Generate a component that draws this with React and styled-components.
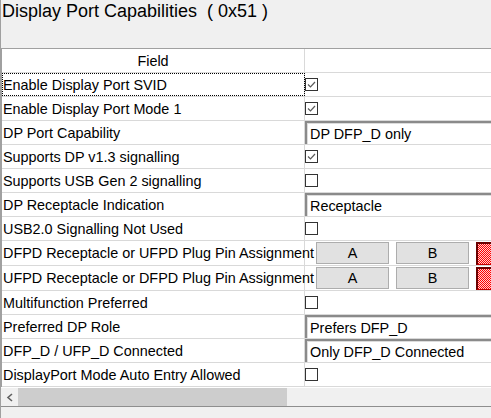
import React from 'react'
import styled, { createGlobalStyle } from 'styled-components'

const Global = createGlobalStyle`
  html, body { margin: 0; padding: 0; background: #f0f0f0; }
  body { font-family: "Liberation Sans", Arial, sans-serif; }
`

const Window = styled.div`
  width: 491px;
  height: 418px;
  overflow: hidden;
  background: #f0f0f0;
  display: flex;
  flex-direction: column;
  border-left: 1px solid #a0a0a0;
  box-sizing: border-box;
`

const Title = styled.div`
  height: 48px;
  padding: 1px 0 0 1px;
  box-sizing: border-box;
  font-size: 18px;
  line-height: 20px;
  color: #000;
  white-space: pre;
`

const Panel = styled.div`
  border-top: 1px solid #a0a0a0;
  border-left: 1px solid #a0a0a0;
  background: #fff;
  display: flex;
  flex-direction: column;
  width: 600px;
`

const Row = styled.div`
  display: flex;
  height: ${p => p.$tall ? 24 : 23}px;
  border-bottom: 1px solid #d9d9d9;
  font-size: 14.4px;
  color: #000;
`

const FieldCell = styled.div`
  width: 303px;
  flex: none;
  border-right: 1px solid #d9d9d9;
  display: flex;
  align-items: center;
  justify-content: ${p => p.$center ? 'center' : 'flex-start'};
  padding-left: ${p => p.$center ? 0 : 1}px;
  box-sizing: border-box;
  white-space: nowrap;
  outline: ${p => p.$focus ? '1px dotted #000' : 'none'};
  outline-offset: -1px;
`

const ValueCell = styled.div`
  flex: 1;
  display: flex;
  align-items: center;
  gap: ${p => p.$gap || 0}px;
  padding-left: ${p => p.$pad || 0}px;
`

const Box = styled.div`
  width: 11px;
  height: 11px;
  border: 1px solid #333;
  background: #fff;
  display: flex;
  align-items: center;
  justify-content: center;
`

const Combo = styled.div`
  align-self: stretch;
  flex: 1;
  display: flex;
  align-items: center;
  padding-left: 3px;
  border-top: 2px solid #8a8a8a;
  border-left: 2px solid #8a8a8a;
  box-shadow: inset 1px 1px 0 #dcdcdc;
  background: #fff;
`

const PinButton = styled.div`
  width: 71px;
  height: 20px;
  background: #e1e1e1;
  border: 1px solid #adadad;
  display: flex;
  align-items: center;
  justify-content: center;
`

const RedBox = styled.div`
  width: 40px;
  height: 20px;
  border-top: 2px solid #6a0000;
  border-left: 2px solid #6a0000;
  border-bottom: 1px solid #c00000;
  background-color: #ff0000;
  background-image: repeating-conic-gradient(#ff0000 0 25%, #ffd0d0 0 50%);
  background-size: 2px 2px;
`

const Scrollbar = styled.div`
  height: 18px;
  background: #f0f0f0;
  display: flex;
  align-items: stretch;
  border-top: 1px solid #fff;
`

const Arrow = styled.div`
  width: 17px;
  display: flex;
  align-items: center;
  justify-content: center;
`

const Thumb = styled.div`
  width: 269px;
  background: #cdcdcd;
`

const Footer = styled.div`
  flex: 1;
  border-top: 1px solid #8e8e8e;
  background: #f0f0f0;
  margin-left: -1px;
`

function Check({ on }) {
  return (
    <Box>
      {on && (
        <svg width="11" height="11" viewBox="0 0 11 11">
          <path d="M2 5.5 L4.5 8 L9 3" fill="none" stroke="#5a5a5a" strokeWidth="1.2" />
        </svg>
      )}
    </Box>
  )
}

const rows = [
  { label: 'Enable Display Port SVID', type: 'check', on: true, focus: true },
  { label: 'Enable Display Port Mode 1', type: 'check', on: true },
  { label: 'DP Port Capability', type: 'combo', value: 'DP DFP_D only' },
  { label: 'Supports DP v1.3 signalling', type: 'check', on: true },
  { label: 'Supports USB Gen 2 signalling', type: 'check', on: false },
  { label: 'DP Receptacle Indication', type: 'combo', value: 'Receptacle' },
  { label: 'USB2.0 Signalling Not Used', type: 'check', on: false },
  { label: 'DFPD Receptacle or UFPD Plug Pin Assignment', type: 'pins' },
  { label: 'UFPD Receptacle or DFPD Plug Pin Assignment', type: 'pins' },
  { label: 'Multifunction Preferred', type: 'check', on: false },
  { label: 'Preferred DP Role', type: 'combo', value: 'Prefers DFP_D' },
  { label: 'DFP_D / UFP_D Connected', type: 'combo', value: 'Only DFP_D Connected' },
  { label: 'DisplayPort Mode Auto Entry Allowed', type: 'check', on: false },
]

function Value({ row }) {
  if (row.type === 'check') return <ValueCell><Check on={row.on} /></ValueCell>
  if (row.type === 'combo') return <ValueCell><Combo>{row.value}</Combo></ValueCell>
  return (
    <ValueCell $pad={11} $gap={7}>
      <PinButton>A</PinButton>
      <PinButton>B</PinButton>
      <RedBox />
    </ValueCell>
  )
}

export default function App() {
  return (
    <>
      <Global />
      <Window>
        <Title>Display Port Capabilities  ( 0x51 )</Title>
        <Panel>
          <Row>
            <FieldCell $center>Field</FieldCell>
            <ValueCell />
          </Row>
          {rows.map(r => (
            <Row key={r.label} $tall={r.type === 'pins'}>
              <FieldCell $focus={r.focus}>{r.label}</FieldCell>
              <Value row={r} />
            </Row>
          ))}
        </Panel>
        <Scrollbar>
          <Arrow>
            <svg width="8" height="9" viewBox="0 0 8 9">
              <path d="M6 1 L2 4.5 L6 8" fill="none" stroke="#606060" strokeWidth="1.6" />
            </svg>
          </Arrow>
          <Thumb />
        </Scrollbar>
        <Footer />
      </Window>
    </>
  )
}
